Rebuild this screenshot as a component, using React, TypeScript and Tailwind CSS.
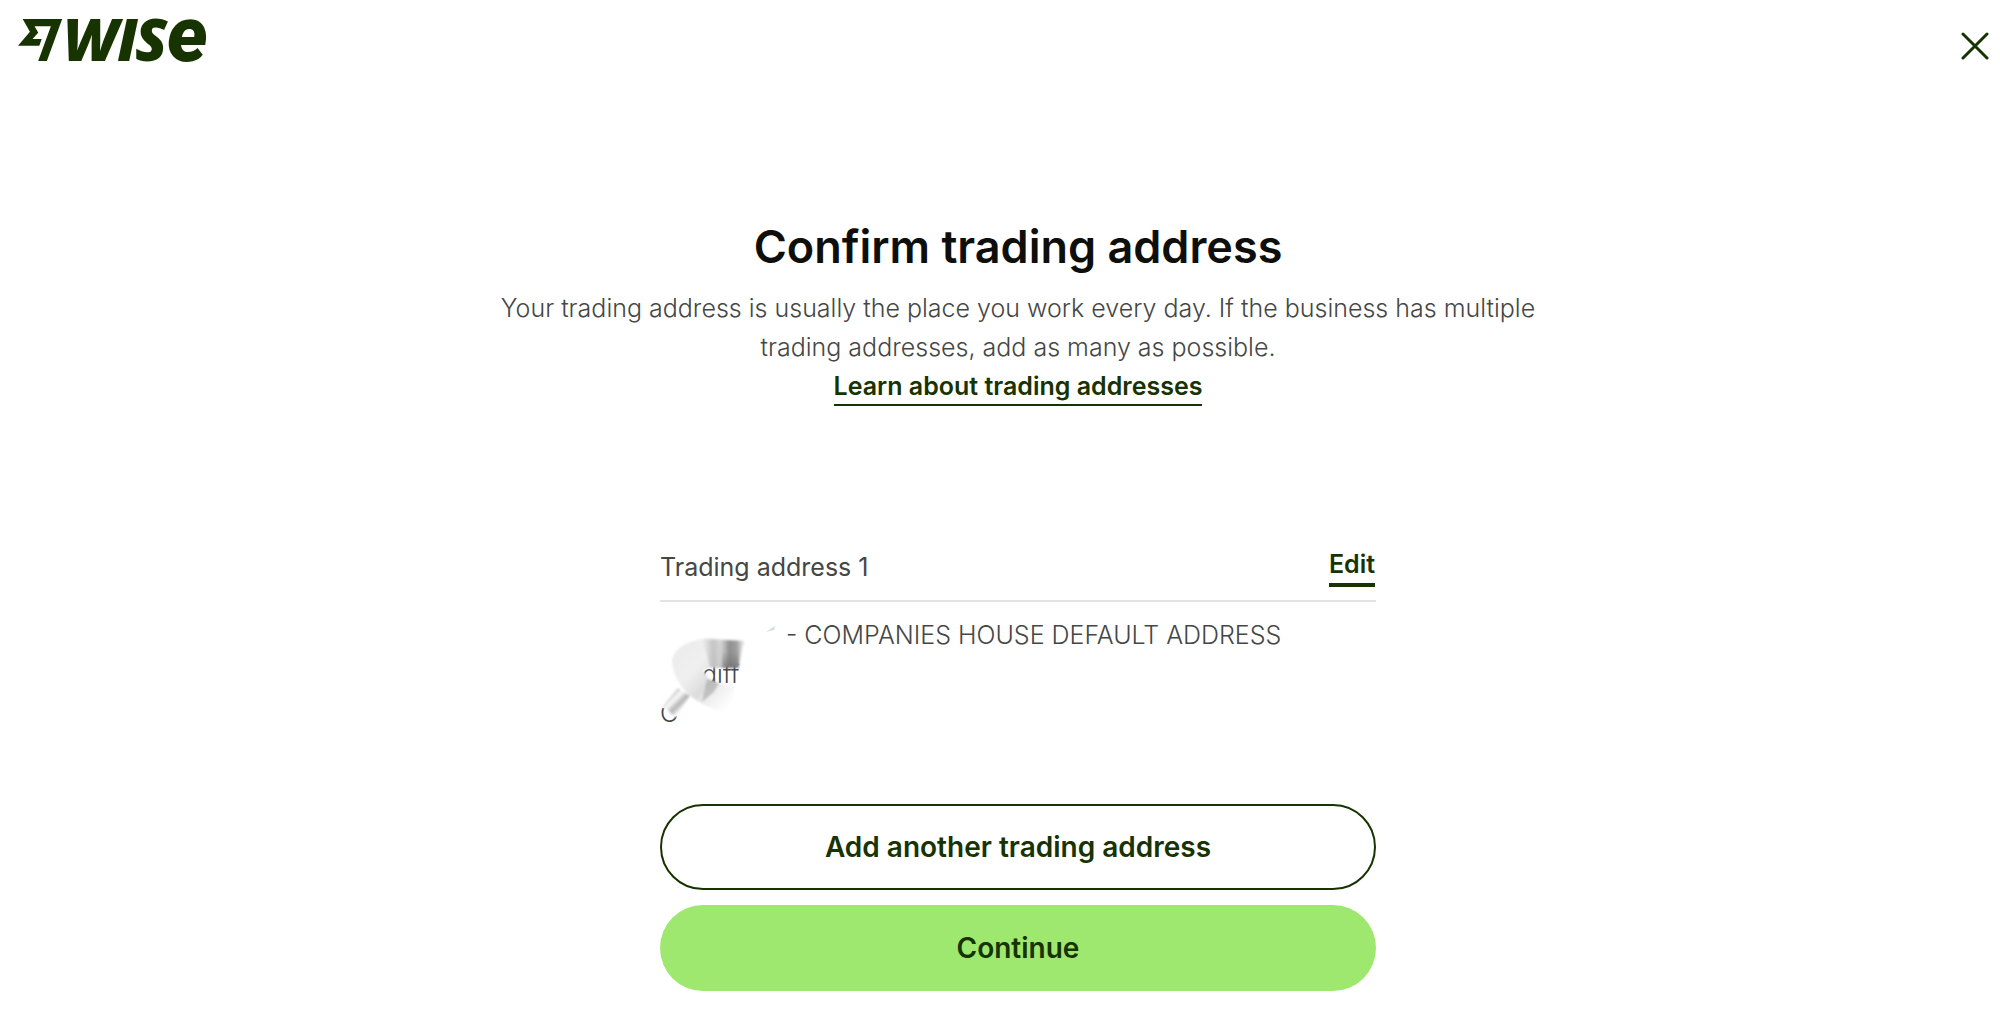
import type { ReactNode } from 'react';

const ADDRESS_LINES = ['- COMPANIES HOUSE DEFAULT ADDRESS', 'diff', 'C'];

function WiseLogo() {
  return (
    <svg
      role="img"
      aria-label="Wise"
      width="192"
      height="80"
      viewBox="0 0 192 80"
      className="overflow-visible fill-[#163300] font-['Open_Sans',sans-serif] font-extrabold italic"
    >
      <path
        transform="translate(0 18) scale(1.84)"
        d="M6.488 7.469 0 15.05h11.585l1.301-3.576H7.922l3.033-3.507.01-.092L8.993 4.48h8.873l-6.878 18.925h4.706L24 .595H2.543l3.945 6.874Z"
      />
      <text x="45" y="61" fontSize="59">
        W
      </text>
      <text x="99" y="61" fontSize="59">
        I
      </text>
      <text x="117" y="61" fontSize="59">
        S
      </text>
      <text x="149" y="61" fontSize="77" className="font-[Roboto,sans-serif] font-black">
        e
      </text>
    </svg>
  );
}

function CloseIcon() {
  return (
    <svg width="28" height="28" viewBox="0 0 28 28" fill="none" aria-hidden="true">
      <path d="M2 2 26 26M26 2 2 26" stroke="#163300" strokeWidth="3" strokeLinecap="round" />
    </svg>
  );
}

// Hides the private part of the address
function Smudge() {
  return (
    <svg
      aria-hidden="true"
      width="130"
      height="110"
      viewBox="0 0 130 110"
      className="pointer-events-none absolute top-5 left-0"
    >
      <defs>
        <linearGradient id="shell" gradientUnits="userSpaceOnUse" x1="12" y1="30" x2="70" y2="84">
          <stop offset="0" stopColor="#ebebeb" />
          <stop offset="0.35" stopColor="#f0f0f0" />
          <stop offset="0.6" stopColor="#dcdcdc" />
          <stop offset="0.75" stopColor="#efefef" />
          <stop offset="1" stopColor="#ffffff" />
        </linearGradient>
        <linearGradient id="dark" x1="0" y1="0" x2="1" y2="0">
          <stop offset="0" stopColor="#bbbbbb" stopOpacity="0" />
          <stop offset="0.25" stopColor="#b0b0b0" stopOpacity="0.7" />
          <stop offset="0.42" stopColor="#bbbbbb" stopOpacity="0.5" />
          <stop offset="0.62" stopColor="#8a8a8a" stopOpacity="0.95" />
          <stop offset="0.8" stopColor="#9a9a9a" stopOpacity="0.9" />
          <stop offset="1" stopColor="#ffffff" stopOpacity="0.2" />
        </linearGradient>
        <linearGradient id="fade" x1="0" y1="0" x2="0" y2="1">
          <stop offset="0" stopColor="#666666" stopOpacity="0" />
          <stop offset="1" stopColor="#555555" stopOpacity="0.5" />
        </linearGradient>
        <linearGradient id="streak" gradientUnits="userSpaceOnUse" x1="6" y1="68" x2="24" y2="86">
          <stop offset="0" stopColor="#ffffff" />
          <stop offset="0.25" stopColor="#c4c4c4" />
          <stop offset="0.5" stopColor="#fafafa" />
          <stop offset="0.75" stopColor="#b4b4b4" />
          <stop offset="1" stopColor="#ffffff" />
        </linearGradient>
        <filter id="soft" x="-20%" y="-20%" width="140%" height="140%">
          <feGaussianBlur stdDeviation="1" />
        </filter>
      </defs>
      <path d="M0 66 22 66 32 76 15 95 10 86 2 86 0 86Z" fill="#ffffff" />
      <g filter="url(#soft)">
        <path
          d="M12 39C14 24 32 17 52 16L84 19C80 27 79 35 79 45L50 46 43 48 49 57 57 61 62 62 74 64C74 76 72 84 68 91C40 85 14 68 12 39Z"
          fill="url(#shell)"
        />
        <path d="M42 17 86 19C82 27 80 37 79 46L62 46 50 45Z" fill="url(#dark)" />
        <path d="M62 29H79V46H62Z" fill="url(#fade)" />
        <path d="M47 57 59 61 54 70 42 80Z" fill="#999999" opacity="0.5" />
        <path d="M2 85 18 66 30 74 15 96 8 88Z" fill="url(#streak)" />
      </g>
      <path d="M106 10 115 4 114 8Z" fill="#7aaec4" opacity="0.4" />
    </svg>
  );
}

interface ActionButtonProps {
  variant: 'primary' | 'secondary';
  children: ReactNode;
}

function ActionButton({ variant, children }: ActionButtonProps) {
  return (
    <button
      type="button"
      className={
        variant === 'primary'
          ? 'h-[86px] w-full rounded-full bg-[#9fe870] text-[28px] font-semibold text-[#163300]'
          : 'h-[86px] w-full rounded-full border-2 border-[#163300] bg-white text-[28px] font-semibold text-[#163300]'
      }
    >
      {children}
    </button>
  );
}

export default function App() {
  return (
    <div className="min-h-screen bg-white font-[Inter,sans-serif] text-[#454745]">
      <header className="flex items-start justify-between pr-[11px] pl-[18px]">
        <WiseLogo />
        <button type="button" aria-label="Close" className="mt-8">
          <CloseIcon />
        </button>
      </header>

      <main className="flex flex-col items-center pt-[137px] pb-10 pl-9">
        <section className="max-w-[1080px] text-center text-[25px] leading-[39px]">
          <h1 className="text-[45px] leading-[60px] font-semibold text-[#0e0f0c]">
            Confirm trading address
          </h1>
          <p className="mt-3 font-light">
            Your trading address is usually the place you work every day. If the business has
            multiple trading addresses, add as many as possible.
          </p>
          <a href="#learn" className="border-b-2 border-[#163300] pb-[3px] font-semibold text-[#163300]">
            Learn about trading addresses
          </a>
        </section>

        <section className="mt-[135px] w-full max-w-[716px] text-[25px] leading-[39px]">
          <div className="flex items-start justify-between border-b-2 border-[#e2e4e2] pb-[13px]">
            <h2 className="mt-[7px]">Trading address 1</h2>
            <a
              href="#edit"
              className="mt-[5px] mr-px border-b-4 border-[#163300] leading-[37px] font-semibold text-[#163300]"
            >
              Edit
            </a>
          </div>
          <div className="relative pt-[14px] font-light">
            <p className="pl-[126px]">{ADDRESS_LINES[0]}</p>
            <p className="pl-[42px]">{ADDRESS_LINES[1]}</p>
            <p>{ADDRESS_LINES[2]}</p>
            <Smudge />
          </div>

          <div className="mt-[71px] flex flex-col gap-[15px]">
            <ActionButton variant="secondary">Add another trading address</ActionButton>
            <ActionButton variant="primary">Continue</ActionButton>
          </div>
        </section>
      </main>
    </div>
  );
}
